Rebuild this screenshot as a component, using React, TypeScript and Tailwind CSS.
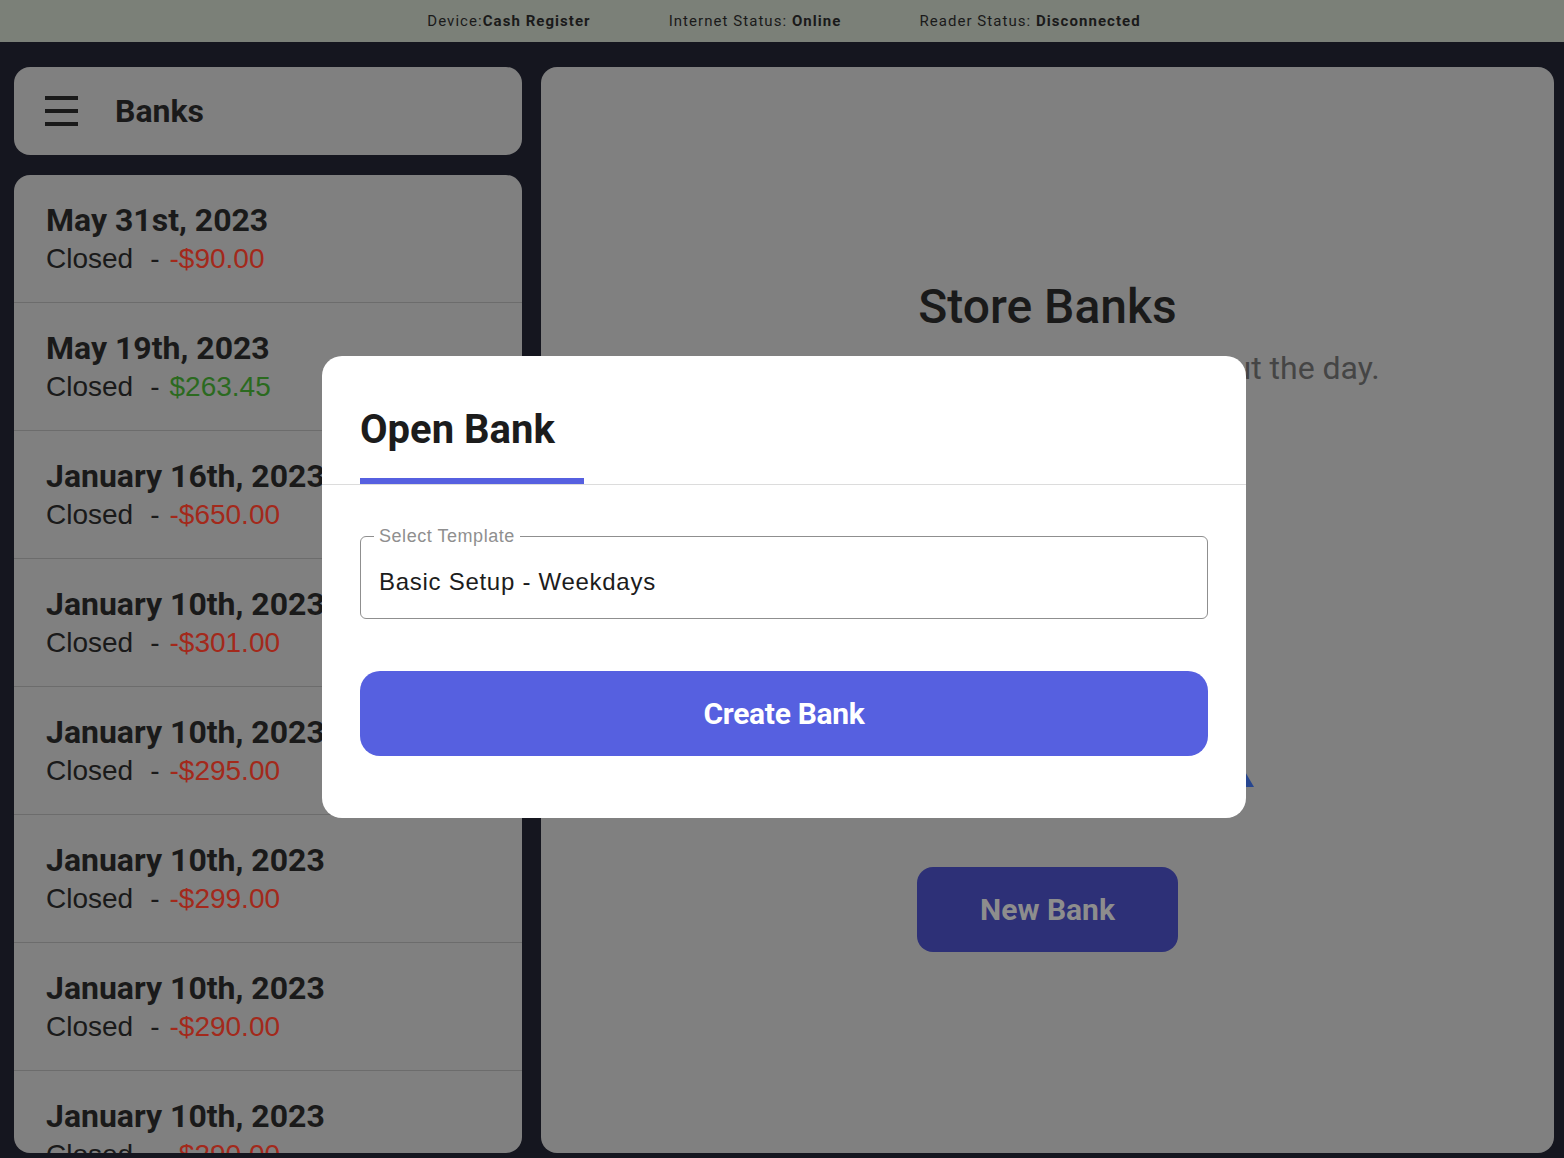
import React from "react";

const banks = [
  { date: "May 31st, 2023", amount: "-$90.00", pos: false },
  { date: "May 19th, 2023", amount: "$263.45", pos: true },
  { date: "January 16th, 2023", amount: "-$650.00", pos: false },
  { date: "January 10th, 2023", amount: "-$301.00", pos: false },
  { date: "January 10th, 2023", amount: "-$295.00", pos: false },
  { date: "January 10th, 2023", amount: "-$299.00", pos: false },
  { date: "January 10th, 2023", amount: "-$290.00", pos: false },
  { date: "January 10th, 2023", amount: "-$290.00", pos: false },
];

export default function App() {
  return (
    <div className="relative w-full h-[1158px] overflow-hidden bg-[#15161f] flex flex-col" style={{ fontFamily: "Roboto, 'Liberation Sans', sans-serif" }}>
      {/* status bar */}
      <div className="h-[42px] shrink-0 bg-[#7b8078] flex items-center justify-center gap-[78px] text-[15px] tracking-[0.07em] text-[#1a1a1a] pl-[4px]">
        <div>Device:<span className="font-bold">Cash Register</span></div>
        <div>Internet Status: <span className="font-bold">Online</span></div>
        <div>Reader Status: <span className="font-bold">Disconnected</span></div>
      </div>

      <div className="flex-1 min-h-0 flex pl-[14px] pr-[10px] pt-[25px] pb-[5px] gap-[19px]">
        {/* left column */}
        <div className="w-[508px] shrink-0 flex flex-col gap-[20px] min-h-0">
          <div className="h-[88px] shrink-0 rounded-[16px] bg-[#808080] flex items-center pl-[31px] gap-[37px]">
            <div className="w-[33px] flex flex-col gap-[9px]">
              <div className="h-[4px] bg-[#1a1a1a]" />
              <div className="h-[4px] bg-[#1a1a1a]" />
              <div className="h-[4px] bg-[#1a1a1a]" />
            </div>
            <div className="text-[32px] font-bold text-[#1a1a1a] leading-none">Banks</div>
          </div>
          <div className="flex-1 min-h-0 rounded-[16px] bg-[#808080] overflow-hidden">
            {banks.map((b, i) => (
              <div key={i} className="h-[128px] border-b border-[#6c6c6c] pl-[32px] pt-[26px]">
                <div className="text-[32px] leading-[38px] font-bold text-[#1a1a1a] whitespace-nowrap">{b.date}</div>
                <div className="text-[28px] leading-[40px] text-[#1a1a1a] whitespace-nowrap" style={{ fontFamily: "'Liberation Sans', Arial, sans-serif" }}>
                  <span>Closed</span>
                  <span className="ml-[17px]">-</span>
                  <span className={"ml-[10px] " + (b.pos ? "text-[#2b6a1f]" : "text-[#a3291b]")}>{b.amount}</span>
                </div>
              </div>
            ))}
          </div>
        </div>

        {/* right panel */}
        <div className="flex-1 rounded-[16px] bg-[#808080] flex flex-col items-center pt-[212px]">
          <div className="text-[48px] leading-[56px] font-medium text-[#1a1a1a]">Store Banks</div>
          <div className="mt-[13px] text-[32px] leading-[40px] text-[#454545] whitespace-nowrap">Track the store cash banks throughout the day.</div>
          <div className="h-[479px] w-[420px]">
            <svg width="420" height="479" viewBox="0 0 420 479">
              <polygon points="402,375 416,399 392,399" fill="#27468f" />
            </svg>
          </div>
          <div className="w-[261px] h-[85px] rounded-[16px] bg-[#2d3077] flex items-center justify-center text-[30px] font-bold text-[#8d8d8d]">New Bank</div>
        </div>
      </div>

      {/* modal */}
      <div className="absolute left-[322px] top-[356px] w-[924px] h-[462px] bg-white rounded-[20px] flex flex-col">
        <div className="pl-[38px] pt-[50px]">
          <div className="w-[224px]">
            <div className="text-[40px] leading-[48px] font-bold text-[#1c1c1c]">Open Bank</div>
            <div className="mt-[24px] h-[6px] bg-[#5660e0]" />
          </div>
        </div>
        <div className="h-px bg-[#dcdcdc]" />
        <div className="px-[38px] pt-[51px]">
          <div className="relative h-[83px] rounded-[6px] border border-[#8f8f8f] flex items-center pl-[18px]" style={{ fontFamily: "'Liberation Sans', Arial, sans-serif" }}>
            <div className="absolute left-[13px] -top-[12px] bg-white px-[5px] text-[18px] leading-[22px] tracking-[0.03em] text-[#8f8f8f]">Select Template</div>
            <div className="text-[24px] tracking-[0.03em] text-[#1c1c1c] mt-[8px]">Basic Setup - Weekdays</div>
          </div>
          <div className="mt-[52px] h-[85px] rounded-[20px] bg-[#5660e0] flex items-center justify-center text-[30px] font-bold text-white tracking-[-0.01em]">Create Bank</div>
        </div>
      </div>
    </div>
  );
}
